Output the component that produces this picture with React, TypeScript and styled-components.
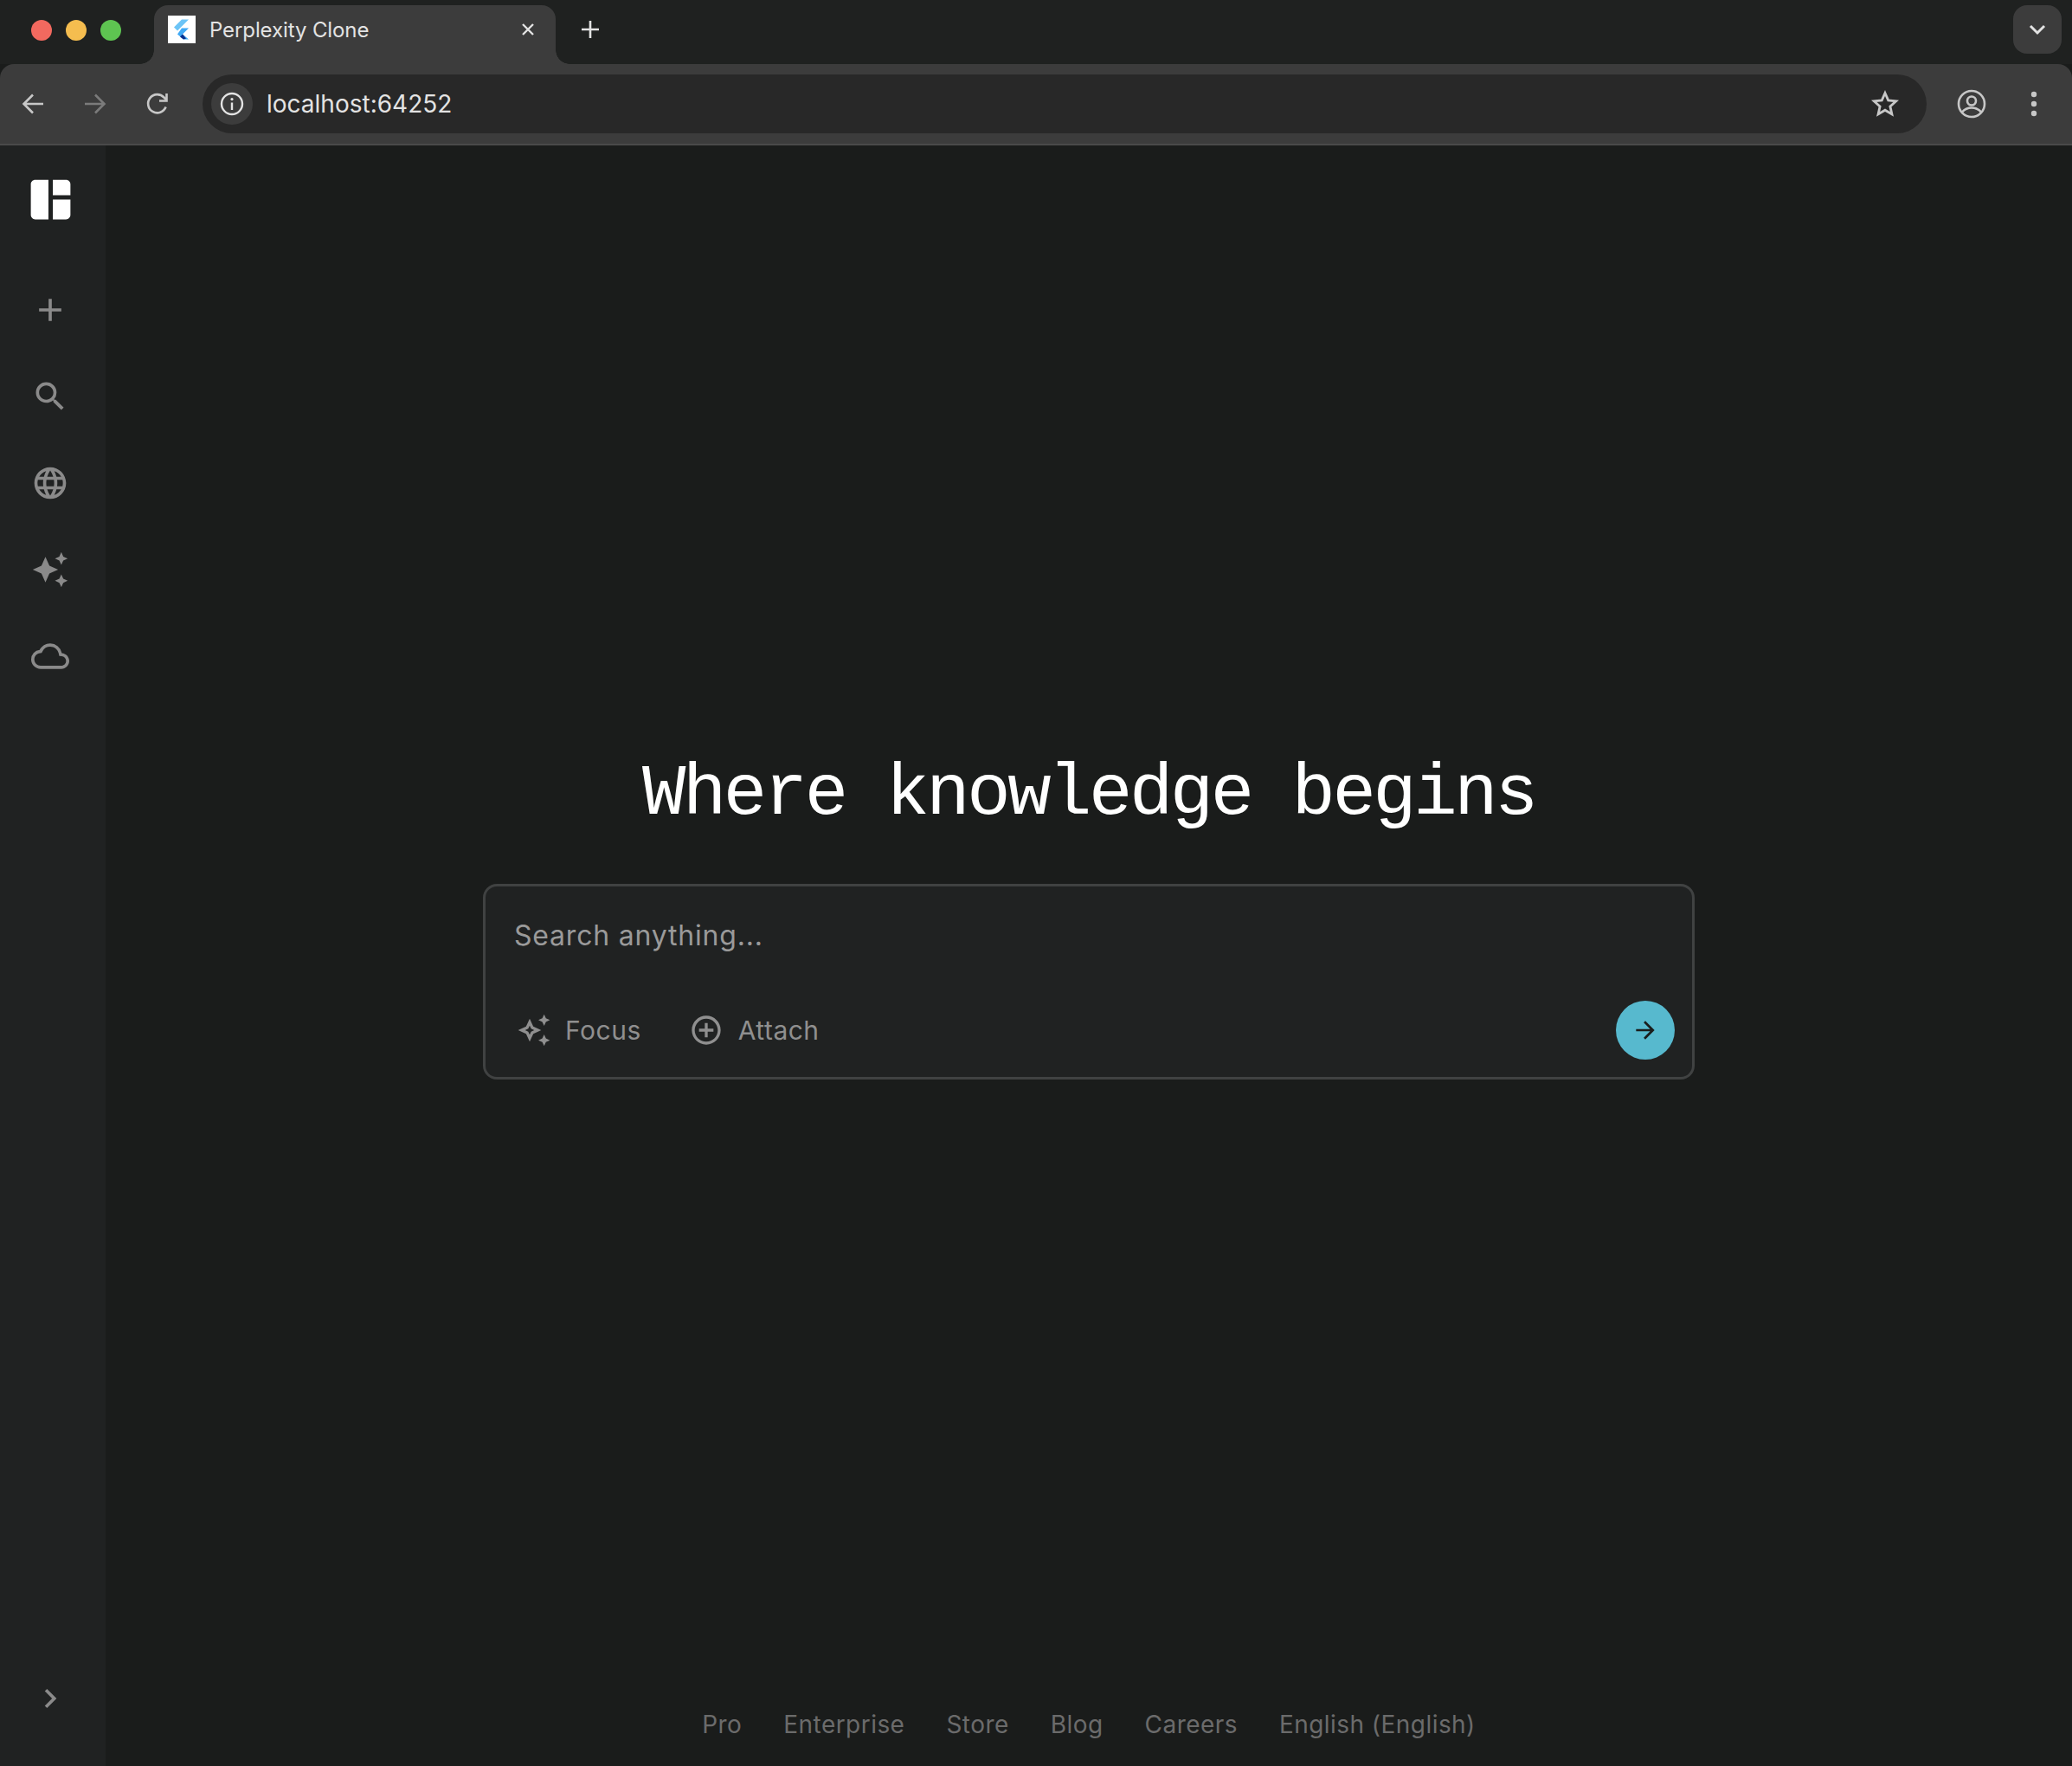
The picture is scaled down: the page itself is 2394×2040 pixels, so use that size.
import React from "react";
import styled, { createGlobalStyle } from "styled-components";
import {
  MdAdd,
  MdAddCircleOutline,
  MdArrowForward,
  MdAutoAwesome,
  MdChevronRight,
  MdLanguage,
  MdOutlineAutoAwesome,
  MdOutlineCloud,
  MdSearch,
  MdSpaceDashboard,
} from "react-icons/md";

const GlobalStyle = createGlobalStyle`
  html, body {
    margin: 0;
    padding: 0;
    background: #1a1c1b;
  }
  * {
    box-sizing: border-box;
  }
`;

const Window = styled.div`
  width: 2394px;
  height: 2040px;
  display: flex;
  flex-direction: column;
  overflow: hidden;
  font-family: Inter, "Liberation Sans", sans-serif;
  background: #1a1c1b;
`;

const TabStrip = styled.div`
  height: 74px;
  flex: none;
  display: flex;
  align-items: flex-start;
  background: #1f2120;
`;

const Lights = styled.div`
  display: flex;
  gap: 16px;
  padding: 23px 0 0 36px;
`;

const Light = styled.span<{ $color: string }>`
  width: 24px;
  height: 24px;
  border-radius: 50%;
  background: ${(p) => p.$color};
`;

const Tab = styled.div`
  position: relative;
  width: 464px;
  height: 68px;
  margin: 6px 0 0 38px;
  padding: 0 14px 12px 16px;
  display: flex;
  align-items: center;
  gap: 16px;
  background: #3c3c3c;
  border-radius: 16px 16px 0 0;
  &::before,
  &::after {
    content: "";
    position: absolute;
    bottom: 0;
    width: 16px;
    height: 16px;
  }
  &::before {
    left: -16px;
    background: radial-gradient(circle at 0 0, #1f2120 15.5px, #3c3c3c 16px);
  }
  &::after {
    right: -16px;
    background: radial-gradient(circle at 100% 0, #1f2120 15.5px, #3c3c3c 16px);
  }
`;

const Favicon = styled.div`
  width: 32px;
  height: 32px;
  flex: none;
  background: #fff;
  display: flex;
`;

const TabTitle = styled.span`
  flex: 1;
  font-size: 24px;
  letter-spacing: -0.1px;
  color: #e3e3e3;
`;

const TabIcon = styled.button`
  width: 36px;
  height: 36px;
  padding: 0;
  border: 0;
  background: none;
  color: #e3e3e3;
  display: flex;
  align-items: center;
  justify-content: center;
`;

const NewTab = styled(TabIcon)`
  margin: 16px 0 0 22px;
`;

const TabMenu = styled(TabIcon)`
  width: 56px;
  height: 56px;
  margin: 6px 12px 0 auto;
  background: #3c3c3c;
  border-radius: 16px;
`;

const Toolbar = styled.div`
  height: 94px;
  flex: none;
  display: flex;
  align-items: center;
  padding: 0 20px 0 14px;
  background: #3c3c3c;
  border-bottom: 2px solid #4a4a4a;
  border-radius: 16px 16px 0 0;
`;

const ToolButton = styled.button<{ $dim?: boolean }>`
  width: 48px;
  height: 48px;
  flex: none;
  padding: 0;
  border: 0;
  background: none;
  color: ${(p) => (p.$dim ? "#7b7b7b" : "#c7c7c7")};
  display: flex;
  align-items: center;
  justify-content: center;
`;

const NavButtons = styled.div`
  display: flex;
  gap: 24px;
`;

const RightButtons = styled.div`
  display: flex;
  gap: 24px;
  margin-left: 28px;
`;

const AddressBar = styled.div`
  flex: 1;
  height: 68px;
  margin-left: 28px;
  padding: 0 24px 0 10px;
  display: flex;
  align-items: center;
  gap: 16px;
  background: #282828;
  border-radius: 34px;
`;

const SiteInfo = styled.div`
  width: 48px;
  height: 48px;
  flex: none;
  border-radius: 50%;
  background: #3c3c3c;
  color: #e3e3e3;
  display: flex;
  align-items: center;
  justify-content: center;
`;

const Url = styled.span`
  flex: 1;
  font-size: 28px;
  color: #e3e3e3;
`;

const Page = styled.div`
  flex: 1;
  min-height: 0;
  display: flex;
`;

const Sidebar = styled.nav`
  width: 122px;
  flex: none;
  display: flex;
  flex-direction: column;
  align-items: center;
  padding: 12px 6px 56px 0;
  background: #202222;
`;

const SidebarItem = styled.div<{ $light?: boolean }>`
  height: 100px;
  flex: none;
  display: flex;
  align-items: center;
  justify-content: center;
  color: ${(p) => (p.$light ? "#ffffff" : "#8a8a8a")};
  margin-bottom: ${(p) => (p.$light ? "28px" : "0")};
`;

const Collapse = styled.div`
  margin-top: auto;
  height: 44px;
  display: flex;
  align-items: center;
  color: #8a8a8a;
`;

const Main = styled.main`
  flex: 1;
  display: flex;
  flex-direction: column;
  align-items: center;
`;

const Center = styled.div`
  flex: 1;
  display: flex;
  flex-direction: column;
  align-items: center;
  padding-top: 690px;
`;

const Heading = styled.h1`
  margin: 0 0 43px;
  height: 120px;
  line-height: 120px;
  font-family: "Liberation Mono", "DejaVu Sans Mono", monospace;
  font-size: 84px;
  font-weight: 400;
  letter-spacing: -3.5px;
  color: #ffffff;
`;

const SearchCard = styled.div`
  width: 1400px;
  height: 226px;
  padding: 35px 20px 20px 33px;
  display: flex;
  flex-direction: column;
  background: #202222;
  border: 3px solid #404242;
  border-radius: 16px;
`;

const Placeholder = styled.div`
  font-size: 32px;
  line-height: 44px;
  letter-spacing: 0.8px;
  color: #9a9a9a;
`;

const CardActions = styled.div`
  margin-top: auto;
  padding-left: 3px;
  display: flex;
  align-items: center;
`;

const ActionButton = styled.button<{ $gap: number }>`
  padding: 0;
  margin-right: 55px;
  border: 0;
  background: none;
  display: flex;
  align-items: center;
  gap: ${(p) => p.$gap}px;
  font-family: inherit;
  font-size: 30px;
  letter-spacing: 0.5px;
  color: #8f8f8f;
`;

const SendButton = styled.button`
  width: 68px;
  height: 68px;
  margin-left: auto;
  padding: 0;
  border: 0;
  border-radius: 50%;
  background: #57b9ce;
  color: #1a1c1b;
  display: flex;
  align-items: center;
  justify-content: center;
`;

const Footer = styled.footer`
  height: 96px;
  flex: none;
  display: flex;
  align-items: center;
  gap: 48px;
`;

const FooterLink = styled.span`
  font-size: 28px;
  letter-spacing: 0.45px;
  color: #6b6b6b;
`;

const footerLinks = ["Pro", "Enterprise", "Store", "Blog", "Careers", "English (English)"];

export default function App() {
  return (
    <>
      <GlobalStyle />
      <Window>
        <TabStrip>
          <Lights>
            <Light $color="#f2695f" />
            <Light $color="#f5bd4f" />
            <Light $color="#5ec451" />
          </Lights>
          <Tab>
            <Favicon>
              <svg width="32" height="32" viewBox="0 0 32 32">
                <path d="M16 4.500h8L11 17.500 7 13.500z" fill="#6cc4f6" />
                <path d="M16 14.500h8l-7 7 7 6h-6l-7-6z" fill="#3fa9f5" />
                <path d="M14 24.500l3-3 4 5-3 1z" fill="#0a2f8c" />
              </svg>
            </Favicon>
            <TabTitle>Perplexity Clone</TabTitle>
            <TabIcon>
              <svg width="18" height="18" viewBox="0 0 18 18">
                <path d="M3 3l12 12M15 3L3 15" stroke="currentColor" strokeWidth="2.4" />
              </svg>
            </TabIcon>
          </Tab>
          <NewTab>
            <svg width="22" height="22" viewBox="0 0 22 22">
              <path d="M11 1v20M1 11h20" stroke="currentColor" strokeWidth="2.6" />
            </svg>
          </NewTab>
          <TabMenu>
            <svg width="22" height="14" viewBox="0 0 22 14">
              <path d="M3 3l8 8 8-8" fill="none" stroke="currentColor" strokeWidth="3" />
            </svg>
          </TabMenu>
        </TabStrip>

        <Toolbar>
          <NavButtons>
            <ToolButton>
              <svg width="26" height="26" viewBox="0 0 26 26" fill="none" stroke="currentColor" strokeWidth="2.6">
                <path d="M25 13H3M13 2.500L2.500 13 13 23.500" />
              </svg>
            </ToolButton>
            <ToolButton $dim>
              <svg width="26" height="26" viewBox="0 0 26 26" fill="none" stroke="currentColor" strokeWidth="2.6">
                <path d="M1 13h22M13 2.500L23.500 13 13 23.500" />
              </svg>
            </ToolButton>
            <ToolButton>
              <svg width="28" height="28" viewBox="0 0 28 28" fill="none" stroke="currentColor" strokeWidth="2.6">
                <path d="M23.600 17.500A10.600 10.600 0 1 1 21.500 6.500L24 9" />
                <path d="M24.500 2v8.500H16" />
              </svg>
            </ToolButton>
          </NavButtons>
          <AddressBar>
            <SiteInfo>
              <svg width="28" height="28" viewBox="0 0 28 28" fill="none" stroke="currentColor" strokeWidth="2.4">
                <circle cx="14" cy="14" r="12" />
                <path d="M14 12.500V21" />
                <circle cx="14" cy="8.600" r="1.600" fill="currentColor" stroke="none" />
              </svg>
            </SiteInfo>
            <Url>localhost:64252</Url>
            <ToolButton>
              <svg width="32" height="32" viewBox="0 0 32 32" fill="none" stroke="currentColor" strokeWidth="2.8">
                <path d="M16 3.500l3.700 8.400 9.100.9-6.900 6.100 2 9-7.900-4.700-7.900 4.700 2-9-6.900-6.100 9.100-.9z" />
              </svg>
            </ToolButton>
          </AddressBar>
          <RightButtons>
            <ToolButton>
              <svg width="34" height="34" viewBox="0 0 34 34" fill="none" stroke="currentColor" strokeWidth="2.6">
                <circle cx="17" cy="17" r="15" />
                <circle cx="17" cy="13.500" r="5" />
                <path d="M6 26.500c3-3.500 7-5 11-5s8 1.500 11 5" />
              </svg>
            </ToolButton>
            <ToolButton>
              <svg width="8" height="30" viewBox="0 0 8 30" fill="currentColor">
                <circle cx="4" cy="4" r="3.200" />
                <circle cx="4" cy="15" r="3.200" />
                <circle cx="4" cy="26" r="3.200" />
              </svg>
            </ToolButton>
          </RightButtons>
        </Toolbar>

        <Page>
          <Sidebar>
            <SidebarItem $light>
              <MdSpaceDashboard size={61} />
            </SidebarItem>
            <SidebarItem>
              <MdAdd size={44} />
            </SidebarItem>
            <SidebarItem>
              <MdSearch size={44} />
            </SidebarItem>
            <SidebarItem>
              <MdLanguage size={44} />
            </SidebarItem>
            <SidebarItem>
              <MdAutoAwesome size={44} />
            </SidebarItem>
            <SidebarItem>
              <MdOutlineCloud size={44} />
            </SidebarItem>
            <Collapse>
              <MdChevronRight size={44} />
            </Collapse>
          </Sidebar>
          <Main>
            <Center>
              <Heading>Where knowledge begins</Heading>
              <SearchCard>
                <Placeholder>Search anything...</Placeholder>
                <CardActions>
                  <ActionButton $gap={16}>
                    <MdOutlineAutoAwesome size={40} />
                    Focus
                  </ActionButton>
                  <ActionButton $gap={17}>
                    <MdAddCircleOutline size={40} />
                    Attach
                  </ActionButton>
                  <SendButton>
                    <MdArrowForward size={32} />
                  </SendButton>
                </CardActions>
              </SearchCard>
            </Center>
            <Footer>
              {footerLinks.map((link) => (
                <FooterLink key={link}>{link}</FooterLink>
              ))}
            </Footer>
          </Main>
        </Page>
      </Window>
    </>
  );
}
